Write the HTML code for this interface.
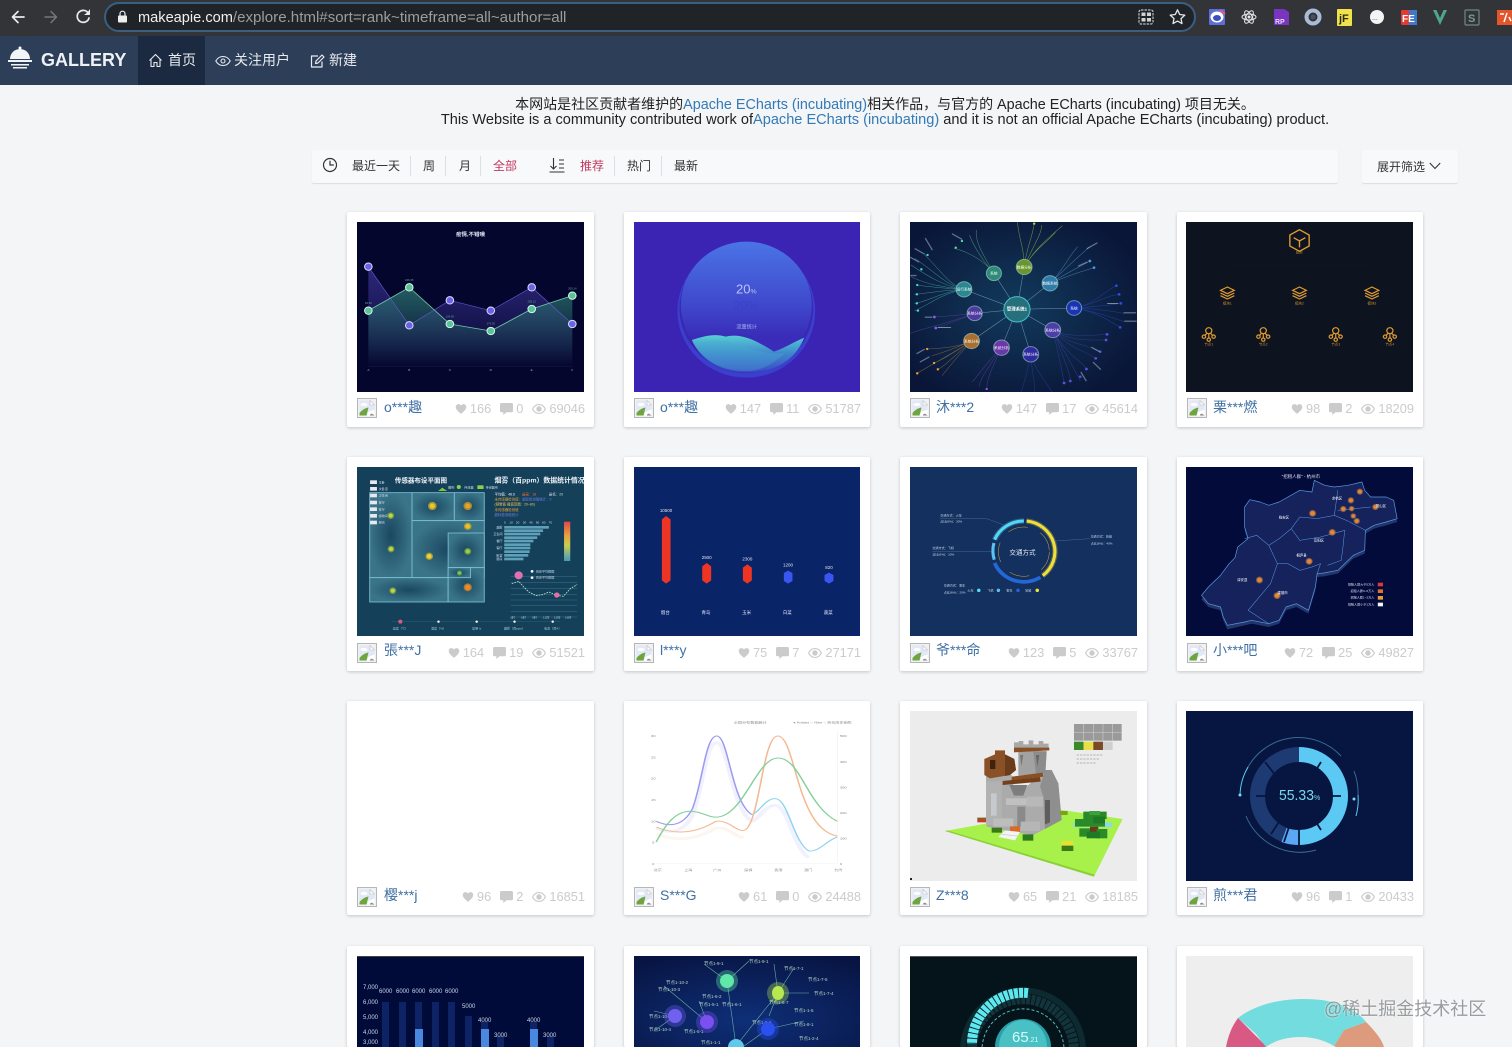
<!DOCTYPE html>
<html><head><meta charset="utf-8"><title>Gallery</title>
<style>
*{box-sizing:border-box}
html,body{margin:0;padding:0;width:1512px;height:1047px;overflow:hidden;background:#f3f5f7;font-family:"Liberation Sans","Noto Sans CJK SC",sans-serif;color:#333}
#w{position:absolute;left:0;top:0;width:1512px;height:1047px;overflow:hidden;background:#f3f5f7}
.abs{position:absolute}
#chrome{position:absolute;left:0;top:0;width:1512px;height:36px;background:#323438}
#addr{position:absolute;left:104px;top:2px;width:1092px;height:30px;background:#202327;border:2px solid #3a5f80;border-radius:15px}
#url{position:absolute;left:138px;top:9.500px;font-size:15.100px;line-height:16px;color:#9a9ea3;white-space:nowrap}
#url b{font-weight:normal;color:#eef0f2;font-size:14.600px}
#nav{position:absolute;left:0;top:36px;width:1512px;height:49px;background:#2d3f58}
#nav .act{position:absolute;left:138px;top:0;width:67px;height:49px;background:#1b2a40}
#nav span{position:absolute;top:16px;font-size:14px;line-height:17px;color:#e8ebf0;white-space:nowrap}
#logo{position:absolute;left:41px;top:14px;font-size:18px;line-height:20px;font-weight:bold;color:#eef1f5;white-space:nowrap}
.notice{position:absolute;left:0;width:1770px;text-align:center;font-size:14px;line-height:16px;color:#222;white-space:nowrap}
.notice a{color:#337ab7}
.notice em{font-style:normal;font-size:14.400px}
.notice.l2{font-size:14.570px}
#filter{position:absolute;left:312px;top:150px;width:1026px;height:33px;background:#f8f9fb;box-shadow:0 1px 1px rgba(0,0,0,.1);border-radius:2px}
#filter span{position:absolute;top:9px;font-size:12px;line-height:14px;color:#333;white-space:nowrap}
#filter span.r{color:#c2395f}
#filter i{position:absolute;top:6px;width:1px;height:20px;background:#dcdfe3}
#more{position:absolute;left:1362px;top:150px;width:96px;height:33px;background:#f8f9fb;box-shadow:0 1px 1px rgba(0,0,0,.1);border-radius:2px}
#more span{position:absolute;left:15px;top:10px;font-size:12px;line-height:14px;color:#333}
.card{position:absolute;width:247px;height:215px;background:#fff;border-radius:2px;box-shadow:0 1px 3px rgba(0,0,0,.2)}
.c2,.c4{width:246px}
.t{position:absolute;left:10px;top:10px;width:227px;height:170px;display:block}
.c2 .t{width:226px}
.card.last{height:101px}
.card.last .t{height:91px}
.av{position:absolute;left:10px;top:186px;width:20px;height:20px}
.n{position:absolute;left:37px;top:187px;font-size:14px;line-height:17px;color:#3f70a4;white-space:nowrap}
.c2 .n,.c3 .n,.c4 .n{left:36px}
.s{position:absolute;right:9px;top:190px;display:flex;align-items:center;height:14px;font-size:12.800px;line-height:14px;color:#cbcbcb}
.s svg{display:block;margin-right:3px;fill:#cbcbcb}
.s b{font-weight:normal;margin-right:9px}
.s b:last-child{margin-right:0}
#wm{position:absolute;left:1324px;top:998px;font-size:18px;line-height:22px;color:rgba(120,125,130,.75);text-shadow:0 0 2px rgba(255,255,255,.9);white-space:nowrap}
svg text{font-family:"Liberation Sans","Noto Sans CJK SC",sans-serif}
</style></head><body><div id="w">

<svg width="0" height="0" style="position:absolute">
<symbol id="h" viewBox="0 0 16 16"><path d="M8 14.5C3 10.5 1 8 1 5.2 1 3 2.7 1.5 4.6 1.5 6 1.5 7.3 2.3 8 3.5 8.7 2.3 10 1.5 11.4 1.5 13.3 1.5 15 3 15 5.2 15 8 13 10.5 8 14.5Z"/></symbol>
<symbol id="m" viewBox="0 0 14 13"><path d="M1.5 0h11A1.5 1.5 0 0 1 14 1.500v7A1.500 1.500 0 0 1 12.500 10H7L3.500 13V10H1.500A1.500 1.500 0 0 1 0 8.500v-7A1.500 1.500 0 0 1 1.500 0Z"/></symbol>
<symbol id="e" viewBox="0 0 14 10"><path fill-rule="evenodd" d="M7 0C3.800 0 1.300 2 0 5c1.300 3 3.800 5 7 5s5.700-2 7-5C12.700 2 10.200 0 7 0Zm0 1.100c2.500 0 4.500 1.500 5.700 3.900C11.500 7.400 9.500 8.900 7 8.900S2.500 7.400 1.300 5C2.500 2.600 4.500 1.100 7 1.100ZM7 2.300a2.700 2.700 0 1 0 0 5.400 2.700 2.700 0 0 0 0-5.400Z"/></symbol>
<symbol id="a" viewBox="0 0 20 20"><rect x=".5" y=".5" width="19" height="19" fill="#f0f1f2" stroke="#b4b6b8"/><path d="M2.500 2.500h10.500l4.500 4.500v10.500H2.500z" fill="#e2e8f8"/><path d="M13 2.500v4.500h4.500z" fill="#fff" stroke="#c0c2c4" stroke-width=".6"/><ellipse cx="7" cy="6.500" rx="3.500" ry="1.600" fill="#fff"/><path d="M2.500 17.500v-2.500c3-3.500 6-5 9-5.500l-2 8z" fill="#6ea53c"/><path d="M11 14l6.500-2.500v6H10z" fill="#fff"/><path d="M13 16.500l2-1 2.500 2h-4.500z" fill="#8f8f8f"/></symbol>
</svg>

<div id="chrome"></div>
<div id="addr"></div>
<svg class="abs" style="left:0;top:0" width="140" height="36" fill="none" stroke-linecap="round" stroke-linejoin="round">
<path d="M24 17H13M18 11.500L12.500 17l5.500 5.500" stroke="#e8eaed" stroke-width="1.700"/>
<path d="M45 17h11M51 11.500l5.500 5.500-5.500 5.500" stroke="#74777b" stroke-width="1.500"/>
<path d="M88.500 13.500A6 6 0 1 0 89 18" stroke="#e8eaed" stroke-width="1.700"/><path d="M89.500 10v4.500H85" fill="#e8eaed" stroke="#e8eaed" stroke-width="1"/>
<rect x="118" y="15.500" width="9" height="7" rx="1" fill="#eee" stroke="none"/><path d="M120 15.500v-1.800a2.500 2.500 0 0 1 5 0v1.800" stroke="#eee" stroke-width="1.200"/>
</svg>
<div id="url"><b>makeapie.com</b>/explore.html#sort=rank~timeframe=all~author=all</div>
<svg class="abs" style="left:1130px;top:0" width="382" height="36" fill="none">
<rect x="9" y="10" width="14" height="14" rx="2" stroke="#bcbfc3" stroke-width="1.200" stroke-dasharray="2.500 1"/><rect x="11.500" y="12.500" width="4" height="3.500" fill="#cfd2d6"/><rect x="17" y="12.500" width="4" height="3.500" fill="#cfd2d6"/><rect x="11.500" y="18" width="4" height="3.500" fill="#cfd2d6"/><rect x="17" y="18" width="4" height="3.500" fill="#cfd2d6"/>
<path d="M47.500 9.800l2.200 4.700 5.100.6-3.800 3.500 1 5-4.500-2.500-4.500 2.500 1-5-3.800-3.500 5.100-.6z" stroke="#e4e6e9" stroke-width="1.300" stroke-linejoin="round"/>
<rect x="79" y="9" width="16" height="16" rx="1" fill="#5b6fd6"/><ellipse cx="87" cy="17" rx="6.500" ry="5.500" fill="#fff"/><ellipse cx="87" cy="18" rx="4" ry="3" fill="#3a4fc0"/><path d="M90 10l5 4" stroke="#e05a8a" stroke-width="2"/>
<g stroke="#e4e6e9" stroke-width="1"><ellipse cx="119" cy="17" rx="7" ry="3"/><ellipse cx="119" cy="17" rx="7" ry="3" transform="rotate(60 119 17)"/><ellipse cx="119" cy="17" rx="7" ry="3" transform="rotate(120 119 17)"/></g><circle cx="119" cy="17" r="1.500" fill="#e4e6e9"/>
<path d="M144 9h10l5 3v13h-15z" fill="#7a35c0"/><text x="145" y="24" font-size="7" fill="#e9d8ff" font-weight="bold">RP</text>
<circle cx="183" cy="17" r="6.500" stroke="#a8bcd8" stroke-width="4"/><circle cx="183" cy="17" r="2.500" fill="#4a5060"/>
<rect x="207" y="9" width="15" height="17" rx="1" fill="#efe24a"/><text x="209" y="22" font-size="11" font-weight="bold" fill="#2a2a10">jF</text>
<circle cx="247" cy="17" r="7" fill="#f4f4f4"/><text x="242" y="20" font-size="7" fill="#444">...</text>
<rect x="271" y="10" width="16" height="15" rx="1.500" fill="#e23a35"/><rect x="279" y="10" width="8" height="15" fill="#3f78c8"/><text x="272" y="22" font-size="10" font-weight="bold" fill="#fff">FE</text>
<path d="M303 10l7 15 7-15h-3.500l-3.500 8-3.500-8z" fill="#4ea888"/>
<rect x="335" y="10" width="14" height="15" rx="1" stroke="#6f8a80" stroke-width="1.200"/><text x="338" y="22" font-size="11" fill="#7f9a90" font-weight="bold">S</text>
<path d="M367 10h15v15h-15z" fill="#e4562a"/><path d="M370 14h4M377 13l-3 9M379 17l2 4" stroke="#fff" stroke-width="1.500"/>
</svg>

<div id="nav">
<div class="act"></div>
<svg class="abs" style="left:7px;top:10px" width="27" height="26">
<circle cx="13" cy="2" r="1.500" fill="#fff"/><path d="M3 13a10 10 0 0 1 20 0z" fill="#f2f4f7"/><rect x="1" y="14" width="24" height="2" fill="#f2f4f7"/><rect x="4" y="18" width="18" height="1.500" fill="#f2f4f7"/><rect x="6" y="21" width="14" height="1.500" fill="#f2f4f7"/>
</svg>
<div id="logo">GALLERY</div>
<svg class="abs" style="left:148px;top:17px" width="15" height="15" fill="none" stroke="#e8ebf0" stroke-width="1.100" stroke-linejoin="round"><path d="M1.500 7.500L7.500 1.500l6 6M3 6.500V13.500h3V9.500h3v4h3V6.500"/></svg>
<span style="left:168px">首页</span>
<svg class="abs" style="left:215px;top:19px" width="16" height="12" fill="none" stroke="#e8ebf0" stroke-width="1.100"><path d="M.8 6C2.500 3 5 1.500 8 1.500S13.500 3 15.200 6C13.500 9 11 10.500 8 10.500S2.500 9 .8 6Z"/><circle cx="8" cy="6" r="2"/></svg>
<span style="left:234px">关注用户</span>
<svg class="abs" style="left:310px;top:18px" width="15" height="14" fill="none" stroke="#e8ebf0" stroke-width="1.200" stroke-linejoin="round"><path d="M12 7.500V13H1.500V2H8"/><path d="M5.500 9.500l.5-2.500 6-6 2 2-6 6z"/></svg>
<span style="left:329px">新建</span>
</div>

<div class="notice" style="top:96px">本网站是社区贡献者维护的<a><em>Apache ECharts (incubating)</em></a>相关作品，与官方的 <em>Apache ECharts (incubating)</em> 项目无关。</div>
<div class="notice l2" style="top:112px">This Website is a community contributed work of<a>Apache ECharts (incubating)</a> and it is not an official Apache ECharts (incubating) product.</div>

<div id="filter">
<svg class="abs" style="left:10px;top:7px" width="16" height="16" fill="none" stroke="#333" stroke-width="1.200"><circle cx="8" cy="8" r="6.500"/><path d="M8 3.800V8h3.800"/></svg>
<span style="left:40px">最近一天</span><i style="left:98px"></i>
<span style="left:111px">周</span><i style="left:133px"></i>
<span style="left:147px">月</span><i style="left:168px"></i>
<span class="r" style="left:181px">全部</span>
<svg class="abs" style="left:237px;top:7px" width="17" height="17" fill="none" stroke="#333" stroke-width="1.100"><path d="M4.500 1v11M1.500 9l3 3 3-3M.5 15h15M10 3h5M10 7h5M10 11h5"/></svg>
<span class="r" style="left:268px">推荐</span><i style="left:302px"></i>
<span style="left:315px">热门</span><i style="left:349px"></i>
<span style="left:362px">最新</span>
</div>
<div id="more"><span>展开筛选</span>
<svg class="abs" style="left:67px;top:12px" width="12" height="8" fill="none" stroke="#333" stroke-width="1.100"><path d="M.8 1l5.200 5.500L11.200 1"/></svg></div>

<!-- ROW 1 -->
<div class="card" style="left:347px;top:212px">
<svg class="t" viewBox="50 51 660 510" preserveAspectRatio="none">
<defs><linearGradient id="g1a" x1="0" y1="0" x2="0" y2="1"><stop offset="0" stop-color="#2d7a72" stop-opacity=".75"/><stop offset="1" stop-color="#2d7a72" stop-opacity="0"/></linearGradient><linearGradient id="g1b" x1="0" y1="0" x2="0" y2="1"><stop offset="0" stop-color="#4a3fb0" stop-opacity=".6"/><stop offset="1" stop-color="#4a3fb0" stop-opacity="0"/></linearGradient></defs>
<rect x="50" y="51" width="660" height="510" fill="#05062e"/>
<path d="M83 185L202 361 320 286 439 317 558 247 676 357V485H83Z" fill="url(#g1b)"/>
<path d="M83 317L202 247 320 357 439 378 558 312 676 272V485H83Z" fill="url(#g1a)"/>
<path d="M83 185L202 361 320 286 439 317 558 247 676 357" fill="none" stroke="#5e55c8" stroke-width="2"/>
<path d="M83 317L202 247 320 357 439 378 558 312 676 272" fill="none" stroke="#6fc8a8" stroke-width="2.500"/>
<g fill="#6a62e8" stroke="#dcdcf8" stroke-width="3"><circle cx="83" cy="185" r="11"/><circle cx="202" cy="361" r="11"/><circle cx="320" cy="286" r="11"/><circle cx="439" cy="317" r="11"/><circle cx="558" cy="247" r="11"/><circle cx="676" cy="357" r="11"/></g>
<g fill="#58c49a" stroke="#dcf4ea" stroke-width="3"><circle cx="83" cy="317" r="11"/><circle cx="202" cy="247" r="11"/><circle cx="320" cy="357" r="11"/><circle cx="439" cy="378" r="11"/><circle cx="558" cy="312" r="11"/><circle cx="676" cy="272" r="11"/></g>
<path d="M83 485H676" stroke="#1c2a5a" stroke-width="1"/>
<text x="380" y="93" font-size="16" fill="#e8e8f4" text-anchor="middle" font-weight="bold">疫情,不错哦</text>
<g font-size="9" fill="#aab" text-anchor="middle"><text x="83" y="498">A</text><text x="202" y="498">B</text><text x="320" y="498">C</text><text x="439" y="498">D</text><text x="558" y="498">E</text><text x="676" y="498">F</text></g>
<g font-size="8" fill="#5ea890" text-anchor="middle"><text x="83" y="297">99.50</text><text x="202" y="228">166.35</text><text x="320" y="338">104.50</text><text x="439" y="358">176.55</text><text x="558" y="292">205.12</text><text x="676" y="253">209.14</text></g>
</svg>
<svg class="av"><use href="#a"/></svg><div class="n">o***趣</div>
<div class="s"><svg width="12" height="12"><use href="#h"/></svg><b>166</b><svg width="13" height="12"><use href="#m"/></svg><b>0</b><svg width="14" height="10"><use href="#e"/></svg><b>69046</b></div>
</div>

<div class="card c2" style="left:624px;top:212px">
<svg class="t" viewBox="854 51 656 510" preserveAspectRatio="none">
<defs><linearGradient id="g2a" x1="0" y1="0" x2="0" y2="1"><stop offset="0" stop-color="#4a74e6"/><stop offset=".5" stop-color="#3f48cc"/><stop offset=".75" stop-color="#3a2cb8"/><stop offset="1" stop-color="#3a2cb8"/></linearGradient><linearGradient id="g2b" x1="0" y1="0" x2="0" y2="1"><stop offset="0" stop-color="#57d0d4"/><stop offset=".5" stop-color="#3f86cc"/><stop offset="1" stop-color="#3b4ac8"/></linearGradient></defs>
<rect x="854" y="51" width="656" height="510" fill="#3b23b4"/>
<ellipse cx="1180" cy="318" rx="200" ry="200" fill="#3a40cc"/>
<ellipse cx="1180" cy="310" rx="194" ry="194" fill="#3a28b4"/>
<ellipse cx="1180" cy="300" rx="190" ry="190" fill="url(#g2a)"/>
<path d="M1022 405C1060 392 1090 385 1120 395 1160 385 1200 400 1260 440 1290 430 1320 410 1348 398 1320 470 1260 502 1180 502 1100 502 1045 460 1022 405Z" fill="url(#g2b)"/>
<path d="M1035 420C1075 398 1120 405 1160 420 1195 432 1240 450 1290 445 1250 485 1215 498 1180 498 1110 498 1060 470 1035 420Z" fill="#49b0d0" opacity=".35"/>
<text x="1180" y="266" font-size="38" fill="#b8c4f8" text-anchor="middle">20<tspan font-size="20">%</tspan></text>
<text x="1180" y="314" font-size="36" fill="#3a3cc4" text-anchor="middle" opacity=".6">20%</text>
<text x="1181" y="371" font-size="15" fill="#a8b4ee" text-anchor="middle">流量统计</text>
</svg>
<svg class="av"><use href="#a"/></svg><div class="n">o***趣</div>
<div class="s"><svg width="12" height="12"><use href="#h"/></svg><b>147</b><svg width="13" height="12"><use href="#m"/></svg><b>11</b><svg width="14" height="10"><use href="#e"/></svg><b>51787</b></div>
</div>

<div class="card c3" style="left:900px;top:212px">
<svg class="t" viewBox="57 51 660 510" preserveAspectRatio="none">
<defs><radialGradient id="g3" cx=".47" cy=".5" r=".6"><stop offset="0" stop-color="#123a5c"/><stop offset="1" stop-color="#0a1638"/></radialGradient></defs>
<rect x="57" y="51" width="660" height="510" fill="url(#g3)"/>
<g fill="none" stroke-width="1.500" opacity=".85">
<path d="M368 313L301 205M368 313L389 186M368 313L464 235M368 313L534 309M368 313L472 375M368 313L408 448M368 313L323 428M368 313L236 408M368 313L245 325M368 313L214 253" stroke="#7aa8c0"/>
<g stroke="#3f9a9a"><path d="M214 253C170 240 150 200 100 150M214 253C160 240 130 200 70 160M214 253C160 245 110 215 60 180M214 253C150 245 110 240 60 215M214 253C150 250 110 245 75 240M214 253C150 255 110 265 70 268M214 253C150 260 110 290 70 295M214 253C150 265 110 300 70 318"/></g>
<g stroke="#5a9a80"><path d="M301 205C270 170 240 120 230 90M301 205C260 150 190 130 185 130M301 205C270 150 245 110 250 75"/></g>
<g stroke="#8aa840"><path d="M389 186C390 130 370 90 370 51M389 186C395 130 415 90 418 55M389 186C410 130 440 90 440 60M389 186C420 130 470 100 482 78M389 186C420 130 470 90 500 62"/></g>
<g stroke="#4a86b8"><path d="M464 235C500 200 520 150 545 125M464 235C510 190 540 160 580 125M464 235C520 200 560 180 580 168M464 235C520 210 570 195 592 188"/></g>
<g stroke="#2a3ea8"><path d="M534 309C590 300 620 260 657 242M534 309C590 300 630 270 665 268M534 309C590 305 640 300 670 295M534 309C600 310 650 320 680 325M534 309C600 320 650 340 680 350M534 309C600 320 640 350 668 367"/></g>
<g stroke="#3a3a98"><path d="M472 375C520 400 590 390 630 388M472 375C520 410 590 405 627 405M472 375C520 420 580 420 610 440M472 375C520 430 570 440 597 460M472 375C510 450 560 470 570 492M472 375C510 450 540 500 552 528M472 375C500 450 525 510 523 528M472 375C490 450 505 530 505 534"/></g>
<g stroke="#8a6a40"><path d="M236 408C190 430 130 430 107 432M236 408C190 430 130 450 120 452M236 408C190 440 140 470 127 474M236 408C190 450 150 490 138 493M236 408C190 440 100 490 78 505M236 408C190 460 160 500 150 512"/></g>
<g stroke="#5a3a9a"><path d="M245 325C200 330 150 335 128 336M245 325C200 345 160 360 132 369M245 325C180 350 100 370 57 385M323 428C300 480 280 520 280 552M323 428C290 480 260 520 258 545M323 428C280 470 250 520 238 530"/></g>
<g stroke="#2a3a9a"><path d="M408 448C400 490 390 530 380 561M408 448C410 490 420 530 420 561M408 448C420 490 450 530 470 561"/></g>
</g>
<g><circle cx="108" cy="150" r="3.500" fill="#43d8d8"/><circle cx="90" cy="193" r="3.500" fill="#43d8d8"/><circle cx="78" cy="240" r="3.500" fill="#43d8d8"/><circle cx="77" cy="268" r="3.500" fill="#43d8d8"/><circle cx="77" cy="295" r="3.500" fill="#43d8d8"/><circle cx="80" cy="317" r="3.500" fill="#43d8d8"/><circle cx="208" cy="108" r="3.500" fill="#58d8a8"/><circle cx="190" cy="128" r="3.500" fill="#58d8a8"/><circle cx="418" cy="56" r="3.500" fill="#a8d848"/><circle cx="580" cy="168" r="4" fill="#4a9ae8"/><circle cx="592" cy="188" r="4" fill="#4a9ae8"/><circle cx="657" cy="242" r="4" fill="#2a50e0"/><circle cx="665" cy="268" r="4" fill="#2a50e0"/><circle cx="670" cy="295" r="4" fill="#2a50e0"/><circle cx="668" cy="367" r="4" fill="#2a50e0"/><circle cx="630" cy="388" r="4" fill="#5a50e0"/><circle cx="627" cy="405" r="4" fill="#5a50e0"/><circle cx="610" cy="440" r="4" fill="#5a50e0"/><circle cx="597" cy="460" r="4" fill="#5a50e0"/><circle cx="570" cy="492" r="4" fill="#5a50e0"/><circle cx="552" cy="515" r="4" fill="#5a50e0"/><circle cx="523" cy="528" r="4" fill="#5a50e0"/><circle cx="505" cy="534" r="4" fill="#5a50e0"/><circle cx="128" cy="336" r="4" fill="#8a60e0"/><circle cx="132" cy="369" r="4" fill="#8a60e0"/><circle cx="107" cy="432" r="3.500" fill="#f0a030"/><circle cx="127" cy="474" r="3.500" fill="#f0a030"/><circle cx="138" cy="493" r="3.500" fill="#f0a030"/><circle cx="78" cy="505" r="3.500" fill="#f0a030"/><circle cx="280" cy="552" r="3.500" fill="#a050e0"/></g>
<g fill="#cfe4f0" opacity=".55"><rect x="100" y="100" width="3" height="42" transform="rotate(-30 100 100)"/><rect x="70" y="132" width="3" height="34" transform="rotate(-60 70 132)"/><rect x="58" y="210" width="18" height="3"/><rect x="58" y="155" width="30" height="3" transform="rotate(30 58 155)"/><rect x="180" y="85" width="34" height="3" transform="rotate(30 180 85)"/><rect x="545" y="182" width="30" height="3" transform="rotate(-25 545 182)"/><rect x="570" y="130" width="36" height="3" transform="rotate(-30 570 130)"/><rect x="630" y="294" width="32" height="3"/><rect x="678" y="322" width="36" height="3"/><rect x="680" y="347" width="36" height="3"/><rect x="100" y="335" width="22" height="3"/><rect x="138" y="366" width="38" height="3"/><rect x="585" y="425" width="28" height="3" transform="rotate(30 585 425)"/><rect x="555" y="500" width="32" height="3" transform="rotate(60 555 500)"/><rect x="590" y="470" width="32" height="3" transform="rotate(45 590 470)"/><rect x="75" y="445" width="28" height="3" transform="rotate(-30 75 445)"/><rect x="85" y="470" width="32" height="3" transform="rotate(-30 85 470)"/></g>
<circle cx="368" cy="313" r="38" fill="#26707c" stroke="#48c0c8" stroke-width="3"/>
<g stroke-width="3" stroke-opacity=".45" stroke="#cfe"><circle cx="301" cy="205" r="22" fill="#2f8a78"/><circle cx="389" cy="186" r="23" fill="#6a962e"/><circle cx="464" cy="235" r="23" fill="#2f7ca8"/><circle cx="534" cy="309" r="22" fill="#1a34b8"/><circle cx="472" cy="375" r="23" fill="#4c3ea8"/><circle cx="408" cy="448" r="23" fill="#2e2aa0"/><circle cx="323" cy="428" r="23" fill="#6a38a8"/><circle cx="236" cy="408" r="23" fill="#a87030"/><circle cx="245" cy="325" r="22" fill="#4e3aa0"/><circle cx="214" cy="253" r="23" fill="#2c8890"/></g>
<g fill="#fff" font-size="11" text-anchor="middle"><text x="368" y="317" font-weight="bold" font-size="13">管理系统1</text><text x="301" y="209">系统</text><text x="389" y="190">数据分析</text><text x="464" y="239">数据系统</text><text x="534" y="313">系统</text><text x="472" y="379">系统分析</text><text x="408" y="452">系统分析</text><text x="323" y="432">系统分析</text><text x="236" y="412">系统分析</text><text x="245" y="329">系统分析</text><text x="214" y="257">运行系统</text></g>
</svg>
<svg class="av"><use href="#a"/></svg><div class="n">沐***2</div>
<div class="s"><svg width="12" height="12"><use href="#h"/></svg><b>147</b><svg width="13" height="12"><use href="#m"/></svg><b>17</b><svg width="14" height="10"><use href="#e"/></svg><b>45614</b></div>
</div>

<div class="card c4" style="left:1177px;top:212px">
<svg class="t" viewBox="860 51 658 510" preserveAspectRatio="none" style="left:9px;width:227px">
<rect x="860" y="51" width="658" height="510" fill="#0d1420"/>
<path d="M990 182H1400" stroke="#1c2430" stroke-dasharray="3 3"/>
<g fill="none" stroke="#e09a30" stroke-width="3.500">
<path d="M1189 74L1217 90V123L1189 139 1161 123V90Z" stroke-width="4"/><path d="M1172 98L1189 108 1206 98M1189 108V127" stroke-width="4"/>
<g id="lay"><path d="M980 246L1000 256 980 266 960 256Z"/><path d="M960 264L980 274 1000 264"/><path d="M960 272L980 282 1000 272"/></g>
<use href="#lay" x="209"/><use href="#lay" x="419"/>
<g id="nd"><circle cx="926" cy="377" r="9"/><circle cx="912" cy="395" r="5"/><circle cx="940" cy="395" r="5"/><circle cx="926" cy="404" r="5"/><path d="M926 386V399M921 385L915 391M931 385L937 391"/></g>
<use href="#nd" x="158"/><use href="#nd" x="368"/><use href="#nd" x="525"/>
</g>
<g font-size="10" fill="#c88a30" text-anchor="middle"><text x="1188" y="145">应用</text><text x="980" y="299">模块1</text><text x="1189" y="299">模块2</text><text x="1399" y="299">模块3</text><text x="926" y="422">节点1</text><text x="1084" y="422">节点2</text><text x="1294" y="422">节点3</text><text x="1451" y="422">节点4</text></g>
</svg>
<svg class="av"><use href="#a"/></svg><div class="n">栗***燃</div>
<div class="s"><svg width="12" height="12"><use href="#h"/></svg><b>98</b><svg width="13" height="12"><use href="#m"/></svg><b>2</b><svg width="14" height="10"><use href="#e"/></svg><b>18209</b></div>
</div>

<!-- ROW 2 -->
<div class="card" style="left:347px;top:457px;height:214px">
<svg class="t" viewBox="50 50 660 507" preserveAspectRatio="none" style="height:169px">
<defs><radialGradient id="r1"><stop offset="0" stop-color="#1a4862"/><stop offset="1" stop-color="#3a7488"/></radialGradient></defs>
<rect x="50" y="50" width="660" height="507" fill="#15405a"/>
<g fill="url(#r1)" stroke="#7cc0d4" stroke-width="2.500"><rect x="87" y="127" width="123" height="255"/><rect x="210" y="127" width="123" height="84"/><rect x="333" y="127" width="87" height="84"/><rect x="210" y="211" width="210" height="171"/><rect x="315" y="248" width="105" height="104"/><rect x="87" y="382" width="228" height="73"/><rect x="315" y="352" width="105" height="103"/><rect x="315" y="352" width="65" height="30"/></g>
<g fill="#e8e8f0"><rect x="88" y="90" width="20" height="11"/><rect x="88" y="110" width="20" height="11"/><rect x="88" y="130" width="20" height="11"/><rect x="88" y="151" width="20" height="11"/><rect x="88" y="171" width="20" height="11"/><rect x="88" y="191" width="20" height="11"/><rect x="88" y="211" width="20" height="11"/></g>
<g font-size="9" fill="#cde"><text x="113" y="99">主卧</text><text x="113" y="119">次卧室</text><text x="113" y="139">卫生间</text><text x="113" y="160">餐厅</text><text x="113" y="180">客厅</text><text x="113" y="200">储物间</text><text x="113" y="220">厨房</text></g>
<text x="160" y="96" font-size="19" fill="#f0f4f8" font-weight="bold">传感器布设平面图</text>
<text x="450" y="96" font-size="20" fill="#f0f4f8" font-weight="bold">烟雾（百ppm）数据统计情况</text>
<path d="M286 122L298 112 312 122Z" fill="#7ac83a"/><circle cx="346" cy="110" r="6" fill="#8ad050"/><rect x="400" y="105" width="18" height="11" fill="#8ad050"/>
<g font-size="9" fill="#cde"><text x="315" y="114">图例</text><text x="362" y="114">传感器</text><text x="424" y="114">传感器布</text></g>
<g><circle cx="269" cy="167" r="10" fill="#e8c830" stroke="#aa9a30" stroke-width="5"/><circle cx="372" cy="167" r="10" fill="#e8a030" stroke="#a88a30" stroke-width="5"/><circle cx="148" cy="196" r="8" fill="#b8d850" stroke="#7a9a40" stroke-width="4"/><circle cx="372" cy="228" r="9" fill="#e8c030" stroke="#aa9a30" stroke-width="4"/><circle cx="149" cy="296" r="8" fill="#b8d850" stroke="#7a9a40" stroke-width="4"/><circle cx="260" cy="318" r="9" fill="#e8d040" stroke="#aa9a30" stroke-width="4"/><circle cx="372" cy="303" r="8" fill="#98d050" stroke="#6a9a40" stroke-width="4"/><circle cx="348" cy="368" r="6" fill="#78c850" stroke="#5a9a40" stroke-width="3"/><circle cx="154" cy="421" r="8" fill="#b8d850" stroke="#7a9a40" stroke-width="4"/><circle cx="372" cy="411" r="10" fill="#e88a30" stroke="#a87a30" stroke-width="4"/></g>
<g font-size="10" fill="#f0c860"><text x="450" y="136" fill="#f0f0f0">平均值：48.6</text><text x="530" y="136" fill="#f07030">最高：18</text><text x="608" y="136" fill="#d0d8e0">最低：29</text><text x="450" y="151" fill="#e8a030">未传感器检测值：</text><text x="530" y="151" fill="#7080e0">超标检测值统计：0</text><text x="450" y="166">(预警值 阈值范围：20~80)</text><text x="450" y="182" fill="#e8a030">未传感器检测值</text><text x="450" y="197" fill="#7080e0">超标检测值统计</text></g>
<g fill="#5ea0b8"><rect x="478" y="227" width="130" height="8"/><rect x="478" y="237" width="113" height="8"/><rect x="478" y="247" width="105" height="8"/><rect x="478" y="258" width="96" height="8"/><rect x="478" y="268" width="85" height="8"/><rect x="478" y="279" width="76" height="8"/><rect x="478" y="289" width="76" height="8"/><rect x="478" y="300" width="74" height="8"/><rect x="478" y="311" width="70" height="8"/><rect x="478" y="322" width="56" height="8"/></g>
<g font-size="9" fill="#cde" text-anchor="end"><text x="473" y="234">烟雾</text><text x="473" y="254">卫生间</text><text x="473" y="275">餐厅</text><text x="473" y="296">客厅</text><text x="473" y="318">卧室</text><text x="473" y="329">厨房</text></g>
<g font-size="9" fill="#cde" text-anchor="middle"><text x="480" y="220">0</text><text x="498" y="220">10</text><text x="517" y="220">20</text><text x="537" y="220">30</text><text x="556" y="220">40</text><text x="575" y="220">50</text><text x="593" y="220">60</text><text x="612" y="220">70</text></g>
<defs><linearGradient id="g5" x1="0" y1="0" x2="0" y2="1"><stop offset="0" stop-color="#e04848"/><stop offset=".35" stop-color="#e8a040"/><stop offset=".6" stop-color="#c8d050"/><stop offset="1" stop-color="#4898c0"/></linearGradient></defs>
<rect x="652" y="214" width="18" height="118" fill="url(#g5)"/>
<g stroke="#4e8ca4" stroke-width="1"><path d="M497 379H690M497 397H690M497 415H690M497 432H690M497 449H690M497 466H690M497 483H690M497 500H690"/></g>
<path d="M500 400L520 393 535 410 550 425 570 436 590 433 608 425 630 435 650 438 670 415 690 403" fill="none" stroke="#b0e8d0" stroke-width="2.500" stroke-dasharray="5 3"/>
<circle cx="520" cy="375" r="12" fill="#e070b0"/><circle cx="631" cy="434" r="8" fill="#e070a0"/><circle cx="559" cy="363" r="4" fill="#fff"/><circle cx="559" cy="382" r="4" fill="#fff"/>
<g font-size="9" fill="#cde"><text x="570" y="366">历史平均数据</text><text x="570" y="385">历史平均数据</text></g>
<g font-size="9" fill="#9cc" text-anchor="middle"><text x="502" y="504">3时</text><text x="534" y="504">6时</text><text x="566" y="504">9时</text><text x="600" y="504">12时</text><text x="632" y="504">15时</text><text x="664" y="504">18时</text></g>
<path d="M150 514H640" stroke="#3a7088"/><circle cx="176" cy="514" r="6" fill="#d85a80"/><g fill="#fff"><circle cx="287" cy="514" r="3.500"/><circle cx="398" cy="514" r="3.500"/><circle cx="508" cy="514" r="3.500"/><circle cx="619" cy="514" r="3.500"/></g>
<g font-size="9" fill="#9cc" text-anchor="middle"><text x="176" y="537">温度（℃）</text><text x="287" y="537">湿度（%）</text><text x="398" y="537">最明 lx</text><text x="508" y="537">烟雾（百ppm）</text><text x="619" y="537">电流（百A）</text></g>
</svg>
<svg class="av" style="top:186px"><use href="#a"/></svg><div class="n" style="top:185px">張***J</div>
<div class="s" style="top:189px"><svg width="12" height="12"><use href="#h"/></svg><b>164</b><svg width="13" height="12"><use href="#m"/></svg><b>19</b><svg width="14" height="10"><use href="#e"/></svg><b>51521</b></div>
</div>

<div class="card c2" style="left:624px;top:457px;height:214px">
<svg class="t" viewBox="854 50 656 507" preserveAspectRatio="none" style="height:169px">
<rect x="854" y="50" width="656" height="507" fill="#0a2468"/>
<g fill="#ee3524"><path d="M935 207L947 197 960 207V390L947 400 935 390Z"/><path d="M1052 348L1065 338 1078 348V390L1065 400 1052 390Z"/><path d="M1170 352L1183 342 1196 352V390L1183 400 1170 390Z"/></g>
<g fill="#3a56f0"><path d="M1289 368L1301 361 1314 368V392L1301 400 1289 392Z"/><path d="M1407 374L1420 367 1433 374V392L1420 400 1407 392Z"/></g>
<g font-size="13" fill="#dfe6f8" text-anchor="middle"><text x="947" y="185">10500</text><text x="1065" y="326">2500</text><text x="1183" y="330">2300</text><text x="1301" y="349">1200</text><text x="1420" y="356">820</text></g>
<g font-size="13" fill="#dfe6f8" text-anchor="middle"><text x="945" y="491">烟台</text><text x="1063" y="491">青岛</text><text x="1181" y="491">玉米</text><text x="1299" y="491">白菜</text><text x="1418" y="491">蔬菜</text></g>
</svg>
<svg class="av"><use href="#a"/></svg><div class="n" style="top:185px">l***y</div>
<div class="s" style="top:189px"><svg width="12" height="12"><use href="#h"/></svg><b>75</b><svg width="13" height="12"><use href="#m"/></svg><b>7</b><svg width="14" height="10"><use href="#e"/></svg><b>27171</b></div>
</div>

<div class="card c3" style="left:900px;top:457px;height:214px">
<svg class="t" viewBox="57 50 660 507" preserveAspectRatio="none" style="height:169px">
<rect x="57" y="50" width="660" height="507" fill="#14305f"/>
<g fill="none" stroke-linecap="butt">
<g opacity=".3"><path d="M303 268A92 92 0 0 1 388 212" stroke="#55d8f4" stroke-width="16"/><path d="M396 212A92 92 0 0 1 443 376" stroke="#f0de3a" stroke-width="16"/></g>
<path d="M303 268A92 92 0 0 1 388 212" stroke="#55d8f4" stroke-width="9"/>
<path d="M396 212A92 92 0 0 1 443 376" stroke="#f0de3a" stroke-width="9"/>
<path d="M436 381A92 92 0 0 1 303 338" stroke="#2468d8" stroke-width="11"/>
<path d="M302 328A92 92 0 0 1 301 278" stroke="#5ac4f0" stroke-width="9"/>
<circle cx="388" cy="304" r="74" stroke="#c8a838" stroke-width="1.500" stroke-dasharray="60 40"/>
<path d="M145 205H280L330 224M480 272L580 265M122 304H296" stroke="#4f8aa8" stroke-width="1"/>
</g>
<text x="384" y="313" font-size="19" fill="#e6eef8" text-anchor="middle">交通方式</text>
<g font-size="9" fill="#c8d8ea"><text x="145" y="198">交通方式：火车</text><text x="145" y="217">占比(6%)：30%</text><text x="582" y="262">交通方式：轮船</text><text x="582" y="282">占比(6%)：40%</text><text x="122" y="296">交通方式：飞机</text><text x="122" y="316">占比(6%)：10%</text><text x="155" y="408">交通方式：客车</text><text x="155" y="429">占比(6%)：20%</text><text x="224" y="423">火车</text><text x="282" y="423">飞机</text><text x="337" y="423">客车</text><text x="392" y="423">轮船</text></g>
<circle cx="257" cy="420" r="5" fill="#50e0f8"/><circle cx="314" cy="420" r="5" fill="#58c0f0"/><circle cx="371" cy="420" r="5" fill="#2468d8"/><circle cx="427" cy="420" r="5" fill="#f0e040"/>
</svg>
<svg class="av"><use href="#a"/></svg><div class="n" style="top:185px">爷***命</div>
<div class="s" style="top:189px"><svg width="12" height="12"><use href="#h"/></svg><b>123</b><svg width="13" height="12"><use href="#m"/></svg><b>5</b><svg width="14" height="10"><use href="#e"/></svg><b>33767</b></div>
</div>

<div class="card c4" style="left:1177px;top:457px;height:214px">
<svg class="t" viewBox="860 50 658 507" preserveAspectRatio="none" style="left:9px;width:227px;height:169px">
<rect x="860" y="50" width="658" height="507" fill="#020b3a"/>
<path d="M905 447L925 420 960 385 985 350 1002 332 1010 300 1040 275 1030 240 1030 180 1045 158 1075 165 1100 175 1130 165 1190 130 1225 135 1232 100 1262 115 1290 120 1330 115 1370 105 1378 130 1395 150 1440 150 1462 160 1472 215 1440 225 1405 235 1380 250 1378 310 1345 325 1300 370 1260 378 1240 380 1235 420 1215 490 1180 470 1150 480 1130 520 1100 530 1050 520 1030 525 980 537 968 510 960 480 925 470Z" fill="#22366c"/>
<path d="M905 435L925 410 960 375 985 340 1002 322 1010 290 1040 265 1030 230 1030 170 1045 148 1075 155 1100 165 1130 155 1190 120 1225 125 1232 90 1262 105 1290 110 1330 105 1370 95 1378 120 1395 140 1440 140 1462 150 1472 205 1440 215 1405 225 1380 240 1378 300 1345 315 1300 360 1260 368 1240 370 1235 410 1215 480 1180 460 1150 470 1130 510 1100 520 1050 510 1030 515 980 525 968 500 960 470 925 460Z" fill="#15225c" stroke="#5a9ae0" stroke-width="2" stroke-linejoin="round"/>
<path d="M1030 265L1065 255 1100 285 1130 265 1165 235 1190 200 1240 205 1290 195 1325 210M1100 285L1125 340 1155 340 1190 360 1225 350 1250 340 1240 370M1165 235L1190 270 1250 260 1320 240 1315 290 1310 330 1270 345M1125 340L1105 400 1040 480 1100 520M1290 195L1300 120M1325 210L1380 240M1300 180L1395 170" fill="none" stroke="#5a9ae0" stroke-width="1.500"/>
<g fill="#e8882c" stroke="#a07050" stroke-width="5" stroke-opacity=".6"><circle cx="1364" cy="124" r="7"/><circle cx="1227" cy="189" r="8"/><circle cx="1284" cy="246" r="8"/><circle cx="1217" cy="333" r="8"/><circle cx="1073" cy="389" r="8"/><circle cx="1124" cy="436" r="8"/><circle cx="1409" cy="170" r="7"/><circle cx="1316" cy="176" r="7"/><circle cx="1338" cy="150" r="7"/><circle cx="1340" cy="175" r="6"/><circle cx="1345" cy="197" r="6"/><circle cx="1355" cy="212" r="7"/></g>
<g font-size="10" fill="#fff" text-anchor="middle"><text x="1144" y="204">临安区</text><text x="1245" y="274">富阳区</text><text x="1195" y="318">桐庐县</text><text x="1023" y="392">淳安县</text><text x="1140" y="431">建德市</text><text x="1298" y="148">余杭区</text><text x="1425" y="170">萧山区</text></g>
<text x="1193" y="83" font-size="13" fill="#dfe6f8" text-anchor="middle">"招租人群" - 杭州市</text>
<g font-size="9" fill="#dde" text-anchor="end"><text x="1406" y="405">招租人群大于5万人</text><text x="1406" y="425">招租人群3~5万人</text><text x="1406" y="445">招租人群1~3万人</text><text x="1406" y="465">招租人群小于1万人</text></g>
<rect x="1416" y="397" width="15" height="11" fill="#d83a3a"/><rect x="1416" y="417" width="15" height="11" fill="#e0702c"/><rect x="1416" y="437" width="15" height="11" fill="#e89a3c"/><rect x="1416" y="457" width="15" height="11" fill="#f4f4f4"/>
</svg>
<svg class="av"><use href="#a"/></svg><div class="n" style="top:185px">小***吧</div>
<div class="s" style="top:189px"><svg width="12" height="12"><use href="#h"/></svg><b>72</b><svg width="13" height="12"><use href="#m"/></svg><b>25</b><svg width="14" height="10"><use href="#e"/></svg><b>49827</b></div>
</div>

<!-- ROW 3 -->
<div class="card" style="left:347px;top:701px;height:214px">
<svg class="av"><use href="#a"/></svg><div class="n" style="top:186px">樱***j</div>
<div class="s" style="top:189px"><svg width="12" height="12"><use href="#h"/></svg><b>96</b><svg width="13" height="12"><use href="#m"/></svg><b>2</b><svg width="14" height="10"><use href="#e"/></svg><b>16851</b></div>
</div>

<div class="card c2" style="left:624px;top:701px;height:214px">
<svg class="t" viewBox="27 47 437 510" preserveAspectRatio="none">
<rect x="27" y="47" width="437" height="510" fill="#fff"/>
<g fill="none" stroke-width="9" opacity=".09"><path d="M70 398C90 412 120 420 140 360 160 280 165 142 187 142 210 142 215 340 255 378C270 370 280 330 300 330 325 330 335 460 365 487" stroke="#7070f0"/><path d="M70 415C100 435 140 440 185 398 210 392 225 430 240 425" stroke="#f4a060"/></g>
<g fill="none" stroke-width="3">
<path d="M70 378C90 392 120 400 140 340 160 260 165 122 187 122 210 122 215 320 255 358" stroke="#9a9af0"/>
<path d="M255 358C270 350 280 310 300 310 325 310 335 440 365 467 385 470 400 435 420 425" stroke="#8fd4f0"/>
<path d="M70 395C100 415 140 420 185 378 210 372 225 410 240 405 270 390 275 122 305 122 340 122 340 400 420 422" stroke="#f4b890"/>
<path d="M70 440C90 380 110 345 140 348 165 352 170 368 190 365 240 355 265 188 305 188 350 188 360 330 420 378" stroke="#80d098"/>
</g>
<path d="M421 105V505M70 505H420" stroke="#eee" fill="none"/>
<g font-size="8" fill="#888"><text x="220" y="84">全国分布数据统计</text><text x="335" y="84">● Adidas  ○ Nike  ○ 折扣历史销售</text>
<text x="60" y="125">30</text><text x="60" y="189">25</text><text x="60" y="253">20</text><text x="60" y="317">15</text><text x="60" y="381">10</text><text x="62" y="445">5</text><text x="62" y="509">0</text>
<text x="425" y="125">500</text><text x="425" y="203">400</text><text x="425" y="279">300</text><text x="425" y="356">200</text><text x="425" y="432">100</text><text x="425" y="509">0</text>
<text x="65" y="527">北京</text><text x="124" y="527">上海</text><text x="180" y="527">广州</text><text x="240" y="527">深圳</text><text x="298" y="527">香港</text><text x="356" y="527">澳门</text><text x="414" y="527">台湾</text></g>
</svg>
<svg class="av"><use href="#a"/></svg><div class="n" style="top:186px">S***G</div>
<div class="s" style="top:189px"><svg width="12" height="12"><use href="#h"/></svg><b>61</b><svg width="13" height="12"><use href="#m"/></svg><b>0</b><svg width="14" height="10"><use href="#e"/></svg><b>24488</b></div>
</div>

<div class="card c3" style="left:900px;top:701px;height:214px">
<svg class="t" viewBox="0 0 227 170">
<rect width="227" height="170" fill="#ececec"/>
<rect x="0" y="167" width="2" height="2" fill="#222"/>
<g transform="translate(20 14) scale(.3333)">
<path d="M45 318L395 255 578 282 492 455Z" fill="#a8f04a"/><path d="M45 318L492 455 494 449 52 316Z" fill="#7cc22c" opacity=".7"/>
<path d="M430 293H546V306H430Z" fill="#8ad8f4"/>
<path d="M168 150L245 150 250 180 290 185 345 135 365 135 385 175 395 285 310 330 240 320 170 305Z" fill="#ababab"/>
<path d="M345 135L365 135 385 175 395 285 345 312 340 215 330 185Z" fill="#8f8f8f"/>
<path d="M168 170H215V300H168Z" fill="#b2b2b2"/><path d="M183 205H200V272H183Z" fill="#c6cace"/>
<path d="M345 225H360V292L345 298Z" fill="#5e5e5e"/>
<path d="M238 180H292L280 212H252Z" fill="#7d7d7d"/>
<path d="M228 220H290V240H228Z" fill="#c0c0c0"/><path d="M262 245H286V305H262Z" fill="#8a8a8a"/><path d="M290 215H340V245H290Z" fill="#b8b8b8"/>
<path d="M272 290H330V318H272Z" fill="#b6b6b6"/><path d="M190 280H250V305H190Z" fill="#bdbdbd"/>
<path d="M240 304H270V322H240Z" fill="#d86a2a"/>
<path d="M225 316L270 321 255 346 205 336Z" fill="#f4f4f4"/><path d="M215 328L262 333" stroke="#c8c8c8" stroke-width="2"/>
<path d="M265 78H350L346 145 265 152Z" fill="#a2a2a2"/><path d="M310 80H350L346 145 318 148Z" fill="#8c8c8c"/><path d="M318 90L328 90 322 125Z" fill="#666"/><path d="M270 90L280 90 274 125Z" fill="#777"/>
<path d="M252 52h14v-4h14v10h16v-12h14v12h16v-10h14v8h16v18H252Z" fill="#a8a8a8"/>
<path d="M252 68H358V76L252 82Z" fill="#8a4f25"/>
<path d="M163 102L195 88V76H225V88L253 102 258 135 240 150 180 160 163 150Z" fill="#8a5026"/>
<path d="M225 88L253 102 258 135 240 150 225 153Z" fill="#6b3c1b"/>
<path d="M180 105H196V132H180Z" fill="#3e2410"/>
<path d="M245 155L338 143 340 155 245 166Z" fill="#8a4f25"/>
<path d="M218 168L330 156 332 170 218 180Z" fill="#74401c"/>
<path d="M142 278H168V292H142Z" fill="#c83a2a"/><path d="M142 278H168V284H142Z" fill="#3a8a2a" opacity=".5"/>
<path d="M185 308H216V323H185Z" fill="#3a7a1a"/><path d="M278 328H310V347H278Z" fill="#2f7a20"/>
<path d="M395 348H430V366H395Z" fill="#e8e030"/><path d="M395 362H430V378H395Z" fill="#3a7a1a"/>
<path d="M390 258H413V270H390Z" fill="#7ca020"/>
<path d="M480 305H505V322H480Z" fill="#6a3a1a"/>
<g fill="#2a8a2a"><path d="M460 260H530V282H460Z"/><path d="M435 282H525V305H435Z"/><path d="M448 310H480V335H448Z"/><path d="M500 312H532V340H500Z"/><path d="M470 320H510V340H470Z" fill="#1f7a26"/></g>
<path d="M478 258H510V270H478Z" fill="#3da23d"/><path d="M490 275H525V295H490Z" fill="#1f7a26"/>
<rect x="432" y="-3" width="143" height="50" fill="#9a9a9a"/><path d="M432 22H575M461 -3V47M490 -3V47M519 -3V47M547 -3V47" stroke="#c8c8c8" stroke-width="2"/>
<rect x="432" y="50" width="29" height="25" fill="#3a8a2a"/><rect x="461" y="50" width="29" height="25" fill="#e8e048"/><rect x="490" y="50" width="29" height="25" fill="#7a4a28"/><rect x="519" y="50" width="29" height="25" fill="#cfcfcf"/>
<path d="M440 90H520M440 102H510M440 114H500" stroke="#c0c0c0" stroke-width="4" stroke-dasharray="7 3"/>
</g>
</svg>
<svg class="av"><use href="#a"/></svg><div class="n" style="top:186px">Z***8</div>
<div class="s" style="top:189px"><svg width="12" height="12"><use href="#h"/></svg><b>65</b><svg width="13" height="12"><use href="#m"/></svg><b>21</b><svg width="14" height="10"><use href="#e"/></svg><b>18185</b></div>
</div>

<div class="card c4" style="left:1177px;top:701px;height:214px">
<svg class="t" viewBox="0 0 227 170" style="left:9px;width:227px">
<rect width="227" height="170" fill="#061640"/>
<g fill="none">
<circle cx="113" cy="85" r="41.500" stroke="#1e3a72" stroke-width="15"/>
<path d="M113 43.500A41.500 41.500 0 1 1 113 126.500" stroke="#5cc8f4" stroke-width="15"/>
<path d="M113 126.500A41.500 41.500 0 0 1 98 124" stroke="#5aa8f4" stroke-width="15"/>
<g stroke="#061640" stroke-width="1.800"><path d="M135 51L125 67M155 85H139M135 119L125 103M113 135V118M98 131L103 116M85 123L93 111M70 85H86M79 51L90 65"/></g>
<path d="M60 60A58 58 0 0 1 155 45M168 60A60 60 0 0 1 172 85M60 105A58 58 0 0 0 130 139" stroke="#3a6a90" stroke-width="1"/>
<path d="M54 84A59 59 0 0 1 62 56M172 84A59 59 0 0 1 170 105" stroke="#5cc8f4" stroke-width="1"/>
</g>
<circle cx="54" cy="84" r="1.500" fill="#7ad8f4"/><circle cx="168" cy="88" r="1.500" fill="#7ad8f4"/>
<text x="93" y="89" font-size="14.500" fill="#7ad8e8" textLength="35" lengthAdjust="spacingAndGlyphs">55.33</text><text x="128" y="89" font-size="7" fill="#7ad8e8">%</text>
</svg>
<svg class="av"><use href="#a"/></svg><div class="n" style="top:186px">煎***君</div>
<div class="s" style="top:189px"><svg width="12" height="12"><use href="#h"/></svg><b>96</b><svg width="13" height="12"><use href="#m"/></svg><b>1</b><svg width="14" height="10"><use href="#e"/></svg><b>20433</b></div>
</div>

<!-- ROW 4 -->
<div class="card last" style="left:347px;top:946px">
<svg class="t" viewBox="0 0 227 91">
<rect width="227" height="91" fill="#000b3a"/><rect width="227" height="1" fill="#444"/>
<g fill="#0e2266"><rect x="25" y="46" width="7" height="45"/><rect x="42" y="46" width="7" height="45"/><rect x="58" y="46" width="7" height="45"/><rect x="75" y="46" width="7" height="45"/><rect x="91" y="46" width="7" height="45"/><rect x="108" y="60" width="7" height="31"/><rect x="124" y="66" width="7" height="25"/><rect x="140" y="80" width="7" height="11"/><rect x="173" y="66" width="7" height="25"/><rect x="190" y="80" width="7" height="11"/></g>
<g fill="#4a88e0"><rect x="58" y="73" width="8" height="18"/><rect x="124" y="73" width="8" height="18"/><rect x="173" y="73" width="8" height="18"/></g>
<g font-size="6" fill="#c8d4ea"><text x="6" y="33">7,000</text><text x="6" y="48">6,000</text><text x="6" y="63">5,000</text><text x="6" y="78">4,000</text><text x="6" y="88">3,000</text>
<text x="22" y="37">6000</text><text x="39" y="37">6000</text><text x="55" y="37">6000</text><text x="72" y="37">6000</text><text x="88" y="37">6000</text><text x="105" y="52">5000</text><text x="121" y="66">4000</text><text x="137" y="81">3000</text><text x="170" y="66">4000</text><text x="186" y="81">3000</text></g>
</svg></div>

<div class="card c2 last" style="left:624px;top:946px">
<svg class="t" viewBox="0 0 226 91">
<defs><radialGradient id="g6" cx=".5" cy=".7" r=".8"><stop offset="0" stop-color="#0e2f78"/><stop offset="1" stop-color="#081442"/></radialGradient></defs>
<rect width="226" height="91" fill="url(#g6)"/>
<g stroke="#6ab0a0" stroke-width=".6" fill="none"><path d="M102 90L93 25M102 90L144 37M93 25L70 8M93 25L115 5M144 37L140 8M144 37L160 12M144 37L175 37M144 37L135 60M73 66L30 30M73 66L65 45M41 60L20 55M41 60L20 75M134 73L110 90M134 73L170 65"/></g>
<g fill="#b8d8c8" font-size="4.500"><text x="70" y="9">节点1-9-1</text><text x="115" y="7">节点1-9-1</text><text x="150" y="14">节点1-7-1</text><text x="174" y="25">节点1-7-5</text><text x="180" y="39">节点1-7-4</text><text x="32" y="28">节点1-10-2</text><text x="24" y="35">节点1-10-3</text><text x="68" y="42">节点1-6-2</text><text x="65" y="50">节点1-5-1</text><text x="88" y="50">节点1-6-1</text><text x="15" y="62">节点1-10-5</text><text x="15" y="75">节点1-10-4</text><text x="50" y="77">节点1-5-1</text><text x="118" y="68">节点1-8-5</text><text x="160" y="56">节点1-1-5</text><text x="160" y="70">节点1-8-1</text><text x="165" y="84">节点1-2-4</text><text x="67" y="88">节点1-1-1</text><text x="135" y="48">节点1-6-7</text></g>
<g opacity=".35"><circle cx="93" cy="25" r="11" fill="#60e8a8"/><circle cx="144" cy="37" r="11" fill="#b8e850"/><circle cx="41" cy="60" r="11" fill="#7060f0"/><circle cx="73" cy="66" r="11" fill="#7a50f0"/><circle cx="134" cy="73" r="11" fill="#2a50f0"/></g>
<circle cx="93" cy="25" r="7" fill="#60e8a8"/><ellipse cx="144" cy="37" rx="6" ry="7" fill="#b8e850"/><circle cx="41" cy="60" r="7" fill="#7060f0"/><circle cx="73" cy="66" r="7" fill="#7a50f0"/><circle cx="134" cy="73" r="7" fill="#2a50f0"/><path d="M94 91A8 8 0 0 1 110 91Z" fill="#60c8e8"/>
</svg></div>

<div class="card c3 last" style="left:900px;top:946px">
<svg class="t" viewBox="0 0 227 91">
<rect width="227" height="91" fill="#04141a"/><rect width="227" height="1" fill="#555"/>
<g fill="none">
<path d="M53.100 91A60 60 0 0 1 172.900 91" stroke="#0c2a30" stroke-width="6"/>
<path d="M62.100 91A51 51 0 0 1 163.900 91" stroke="#14343c" stroke-width="10" stroke-dasharray="4 1"/>
<path d="M118 37A51 51 0 0 0 62 88" stroke="#5ee8f0" stroke-width="10" stroke-dasharray="4 1"/>
<path d="M72.100 91A41 41 0 0 1 153.900 91" stroke="#5ab8b8" stroke-width="1" stroke-dasharray="3 2"/>
</g>
<path d="M85 91A28 28 0 0 1 141 91Z" fill="#2aa0a8"/><path d="M89 91A24 27 0 0 1 137 91Z" fill="#48c0c4"/>
<text x="102" y="86" font-size="15" fill="#d8fbfb">65<tspan font-size="7">.21</tspan></text>
</svg></div>

<div class="card c4 last" style="left:1177px;top:946px">
<svg class="t" viewBox="0 0 227 91" style="left:9px;width:227px">
<rect width="227" height="91" fill="#eeeeee"/>
<path d="M40 91C42 80 46 70 52 62L80 90V91Z" fill="#d85a84"/>
<path d="M180 66C190 76 196 84 198 91H150L148 90 158 74Z" fill="#de9a7c"/>
<path d="M52 62C70 48 95 43 118 43 145 43 168 50 180 66L158 74 148 90C140 85 128 81 115 81 100 81 88 85 80 91L70 78Z" fill="#72dcde"/>
</svg></div>

<div id="wm">@稀土掘金技术社区</div>
</div></body></html>
